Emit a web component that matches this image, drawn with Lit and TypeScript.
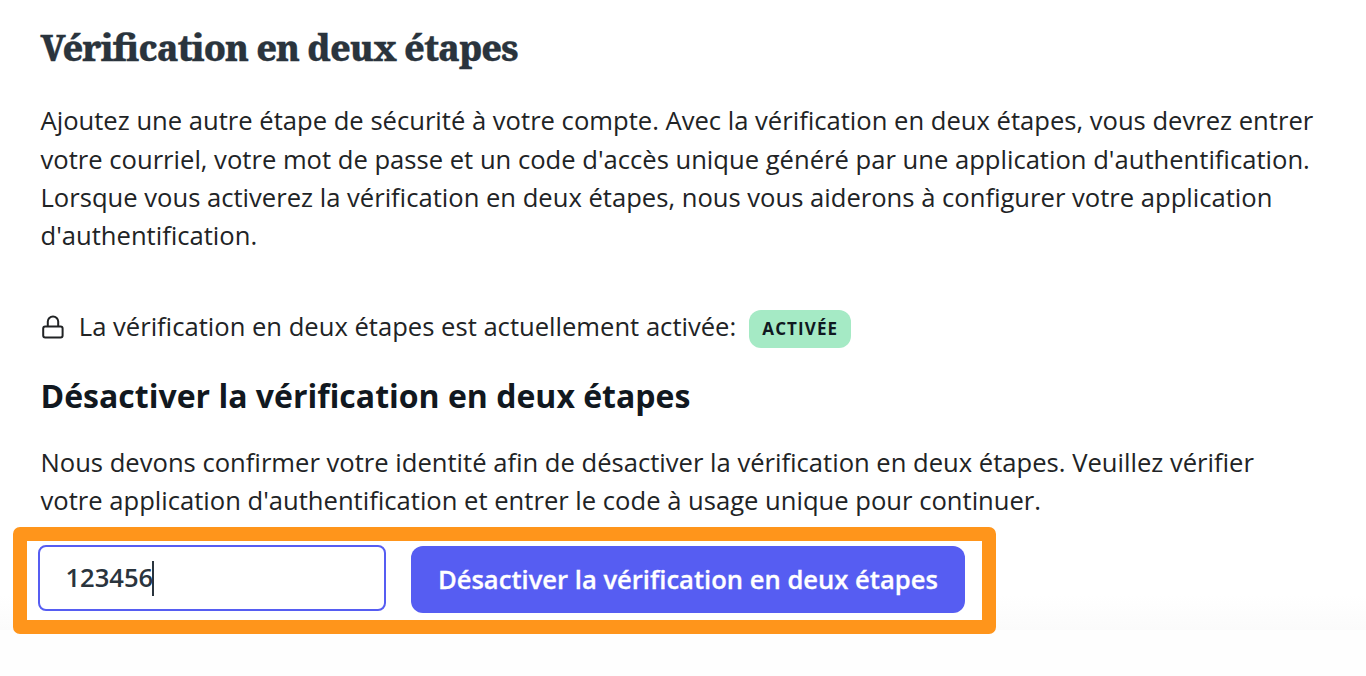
import { LitElement, css, html } from "lit";
import { customElement } from "lit/decorators.js";

@customElement("app-root")
class AppRoot extends LitElement {
    static styles = css`
        :host {
            display: block;
            box-sizing: border-box;
            width: 1366px;
            height: 676px;
            padding: 24px 0 0 40.5px;
            overflow: hidden;
            background: linear-gradient(#fff 595px, #fbfbfb 630px, #fefefe 630px);
            color: #212325;
            font: 25.6px/38.4px "Open Sans", sans-serif;
        }

        h1,
        h2,
        p {
            margin: 0;
            white-space: nowrap;
        }

        h1 {
            color: #2a343d;
            font: 800 35.5px/47px "Noto Serif", "Liberation Serif", serif;
            font-feature-settings: "liga" 1;
            letter-spacing: -0.98px;
            -webkit-text-stroke: 0.3px #2a343d;
        }

        .intro {
            margin-top: 31.2px;
        }

        .status {
            display: flex;
            height: 38px;
            margin-top: 53.8px;
        }

        .lock {
            width: 24px;
            height: 26px;
            margin: 4px 13.8px 0 0.5px;
        }

        .status-text {
            line-height: 37px;
            margin-top: -2px;
        }

        .badge {
            box-sizing: border-box;
            width: 102px;
            height: 38px;
            margin: 0.4px 0 0 13px;
            border-radius: 12px;
            background: #a5eac5;
            color: #101820;
            font-size: 17px;
            line-height: 38px;
            font-weight: 700;
            letter-spacing: 1.1px;
            text-align: center;
        }

        h2 {
            margin-top: 26px;
            color: #111820;
            font-size: 32px;
            line-height: 44px;
            font-weight: 700;
        }

        .help {
            margin-top: 26px;
        }

        .highlight {
            display: flex;
            align-items: flex-start;
            box-sizing: border-box;
            width: 983px;
            height: 107px;
            margin: 6.6px 0 0 -27.1px;
            padding: 4px 11px;
            border: 14px solid #ff951b;
            border-radius: 7px;
            background: #fff;
            background-clip: padding-box;
        }

        .code {
            display: flex;
            align-items: center;
            box-sizing: border-box;
            width: 348px;
            height: 66px;
            padding-left: 25px;
            border: 2.5px solid #565df2;
            border-radius: 8px;
            color: #2a343d;
            font-weight: 600;
        }

        .caret {
            width: 2px;
            height: 35px;
            margin-left: -1px;
            background: #2a343d;
        }

        .disable {
            width: 554px;
            height: 67px;
            margin: 1px 0 0 24.5px;
            padding: 1px 0 0;
            border: 0;
            border-radius: 12px;
            background: #565df2;
            color: #fff;
            font: inherit;
            font-weight: 600;
            -webkit-text-stroke: 0.3px #fff;
        }
    `;

    protected render() {
        return html`
            <h1>Vérification en deux étapes</h1>
            <p class="intro">
                Ajoutez une autre étape de sécurité à votre compte. Avec la vérification en deux étapes, vous devrez entrer<br />
                votre courriel, votre mot de passe et un code d'accès unique généré par une application d'authentification.<br />
                Lorsque vous activerez la vérification en deux étapes, nous vous aiderons à configurer votre application<br />
                d'authentification.
            </p>
            <div class="status">
                <svg class="lock" viewBox="0 0 24 26" fill="none" stroke="#212325" stroke-width="2">
                    <rect x="2.2" y="12.6" width="19.4" height="11" rx="2" />
                    <path d="M6.8 12.6V7.6a5.2 5.2 0 0 1 10.4 0v5" />
                </svg>
                <span class="status-text">La vérification en deux étapes est actuellement activée:</span>
                <span class="badge">ACTIVÉE</span>
            </div>
            <h2>Désactiver la vérification en deux étapes</h2>
            <p class="help">
                Nous devons confirmer votre identité afin de désactiver la vérification en deux étapes. Veuillez vérifier<br />
                votre application d'authentification et entrer le code à usage unique pour continuer.
            </p>
            <div class="highlight">
                <div class="code">123456<span class="caret"></span></div>
                <button class="disable">Désactiver la vérification en deux étapes</button>
            </div>
        `;
    }
}

declare global {
    interface HTMLElementTagNameMap {
        "app-root": AppRoot;
    }
}
